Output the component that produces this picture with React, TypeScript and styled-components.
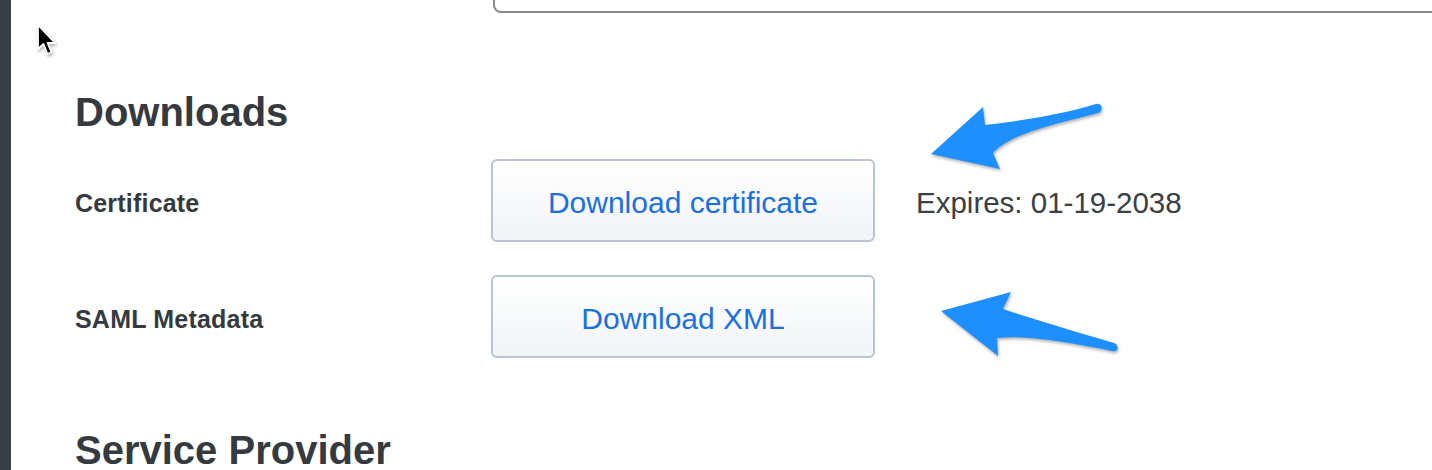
import styled, { createGlobalStyle } from "styled-components";

const GlobalStyle = createGlobalStyle`
    html, body {
        margin: 0;
        padding: 0;
        background: #fff;
        overflow: hidden;
    }
    body {
        font-family: "Liberation Sans", Arial, Helvetica, sans-serif;
        color: #343a40;
    }
`

const Page = styled.div`
    position: relative;
    display: flex;
    width: 1432px;
    height: 470px;
    overflow: hidden;
`

const Strip = styled.div`
    width: 11px;
    flex-shrink: 0;
    background: #363d45;
`

const Main = styled.div`
    flex: 1;
    padding-left: 64px;
    overflow: hidden;
`

const TopBox = styled.div`
    height: 11px;
    margin-left: 418px;
    margin-right: -20px;
    border: 2px solid #8a8a8a;
    border-top: none;
    border-radius: 0 0 8px 8px;
`

const Heading = styled.h2<{ $gap: number }>`
    margin: ${p => p.$gap}px 0 0;
    font-size: 40px;
    line-height: 46px;
    font-weight: 700;
    color: #343a40;
`

const Row = styled.div<{ $gap: number }>`
    display: grid;
    grid-template-columns: 375px 384px auto;
    column-gap: 41px;
    align-items: center;
    margin-top: ${p => p.$gap}px;
`

const Label = styled.div`
    padding-top: 5px;
    font-size: 25px;
    font-weight: 700;
    letter-spacing: 0.2px;
    color: #343a40;
`

const Button = styled.button`
    box-sizing: border-box;
    height: 83px;
    padding: 5px 0 0;
    border: 2px solid #bac4ce;
    border-radius: 6px;
    background: linear-gradient(#ffffff, #f1f3f6);
    font-family: inherit;
    font-size: 30px;
    color: #1a6fe4;
    cursor: pointer;
`

const Note = styled.span`
    padding-top: 4px;
    font-size: 29.5px;
    color: #3a4045;
`

const Overlay = styled.svg<{ $left: number; $top: number }>`
    position: absolute;
    left: ${p => p.$left}px;
    top: ${p => p.$top}px;
    overflow: visible;
    pointer-events: none;
    filter: drop-shadow(1px 2px 1.5px rgba(0, 0, 0, 0.3));
`

const arrowBlue = "#1e8fff";

const ArrowUp = () => (
    <Overlay $left={925} $top={100} width={185} height={75} viewBox="925 100 185 75">
        <path
            fill={arrowBlue}
            d="M931,154 L983,107 L985,125 C1020,121 1065,114 1096,104 C1102,102 1104,111 1098,113 C1060,123 1010,133 993,153 L1000,169 Z"
        />
    </Overlay>
)

const ArrowDown = () => (
    <Overlay $left={935} $top={285} width={190} height={75} viewBox="935 285 190 75">
        <path
            fill={arrowBlue}
            d="M941,311 L1011,292 L1003,309 C1030,318 1070,330 1114,343 C1120,345 1118,353 1112,351 C1070,343 1030,335 997,338 L998,356 Z"
        />
    </Overlay>
)

const Cursor = () => (
    <Overlay $left={34} $top={22} width={28} height={38} viewBox="34 22 28 38">
        <path
            d="M38,25 L38,49 L43.5,44 L47.5,54 L51.5,52 L47.5,43 L55,43 Z"
            fill="#000"
            stroke="#fff"
            strokeWidth={1.8}
            strokeLinejoin="round"
        />
    </Overlay>
)

export default function App() {
    return (
        <>
            <GlobalStyle />
            <Page>
                <Strip />
                <Main>
                    <TopBox />
                    <Heading $gap={76}>Downloads</Heading>
                    <Row $gap={24}>
                        <Label>Certificate</Label>
                        <Button>Download certificate</Button>
                        <Note>Expires: 01-19-2038</Note>
                    </Row>
                    <Row $gap={33}>
                        <Label>SAML Metadata</Label>
                        <Button>Download XML</Button>
                    </Row>
                    <Heading $gap={69}>Service Provider</Heading>
                </Main>
                <ArrowUp />
                <ArrowDown />
                <Cursor />
            </Page>
        </>
    )
}
